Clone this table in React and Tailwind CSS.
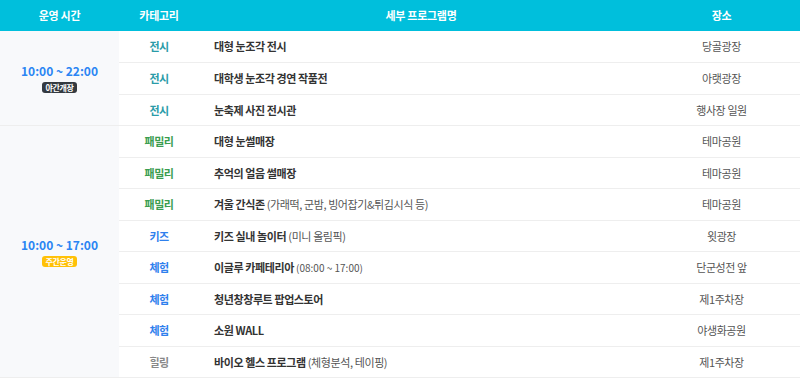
import React from "react";

const rows = [
  { cat: "전시", cc: "text-[#2a9ba8]", name: "대형 눈조각 전시", place: "당골광장" },
  { cat: "전시", cc: "text-[#2a9ba8]", name: "대학생 눈조각 경연 작품전", place: "아랫광장" },
  { cat: "전시", cc: "text-[#2a9ba8]", name: "눈축제 사진 전시관", place: "행사장 일원" },
  { cat: "패밀리", cc: "text-[#3a9d4f]", name: "대형 눈썰매장", place: "테마공원" },
  { cat: "패밀리", cc: "text-[#3a9d4f]", name: "추억의 얼음 썰매장", place: "테마공원" },
  { cat: "패밀리", cc: "text-[#3a9d4f]", name: "겨울 간식존", sub: "(가래떡, 군밤, 빙어잡기&튀김시식 등)", place: "테마공원" },
  { cat: "키즈", cc: "text-[#2f80ed]", name: "키즈 실내 놀이터", sub: "(미니 올림픽)", place: "윗광장" },
  { cat: "체험", cc: "text-[#2f80ed]", name: "이글루 카페테리아", sub: "(08:00 ~ 17:00)", small: true, place: "단군성전 앞" },
  { cat: "체험", cc: "text-[#2f80ed]", name: "청년창창루트 팝업스토어", place: "제1주차장" },
  { cat: "체험", cc: "text-[#2f80ed]", name: "소원 WALL", place: "야생화공원" },
  { cat: "힐링", cc: "text-[#888888]", name: "바이오 헬스 프로그램", sub: "(체형분석, 테이핑)", place: "제1주차장" },
];

function TimeCell({ time, badge, badgeCls, span }) {
  return (
    <td rowSpan={span} className="bg-[#f8f9fb] border-b border-[#eeeeee] text-center align-middle">
      <div className="flex flex-col items-center gap-[3px]">
        <div className="text-[12px] font-bold text-[#2b85f3] leading-[16px]">{time}</div>
        <span className={"text-[8px] leading-[11px] font-bold text-white px-[3px] rounded-[3px] tracking-[-0.3px] " + badgeCls}>{badge}</span>
      </div>
    </td>
  );
}

export default function App() {
  return (
    <div className="w-[800px] h-[382px] bg-white overflow-hidden" style={{ fontFamily: '"Noto Sans CJK KR", "Noto Sans", sans-serif' }}>
      <table className="w-[800px] table-fixed border-collapse">
        <colgroup>
          <col className="w-[119px]" />
          <col className="w-[80px]" />
          <col className="w-[444px]" />
          <col className="w-[157px]" />
        </colgroup>
        <thead>
          <tr className="bg-[#00bfdc] text-white text-[11px] h-[31px] tracking-[-0.3px]">
            <th className="font-semibold">운영 시간</th>
            <th className="font-semibold">카테고리</th>
            <th className="font-semibold">세부 프로그램명</th>
            <th className="font-semibold">장소</th>
          </tr>
        </thead>
        <tbody>
          {rows.map((r, i) => (
            <tr key={i} className="h-[31.5px]">
              {i === 0 && <TimeCell span={3} time="10:00 ~ 22:00" badge="야간개장" badgeCls="bg-[#343a40]" />}
              {i === 3 && <TimeCell span={8} time="10:00 ~ 17:00" badge="주간운영" badgeCls="bg-[#ffc107]" />}
              <td className={"text-center text-[11px] font-bold tracking-[-0.5px] border-b border-[#eeeeee] " + r.cc}>{r.cat}</td>
              <td className="pl-[15px] text-[11px] text-[#333333] tracking-[-0.4px] border-b border-[#eeeeee]">
                <span className="font-bold">{r.name}</span>
                {r.sub && <span className={"text-[#555555] " + (r.small ? "text-[10px] tracking-[0px]" : "")}> {r.sub}</span>}
              </td>
              <td className="text-center text-[11px] text-[#555555] tracking-[-0.4px] border-b border-[#eeeeee]">{r.place}</td>
            </tr>
          ))}
        </tbody>
      </table>
    </div>
  );
}
